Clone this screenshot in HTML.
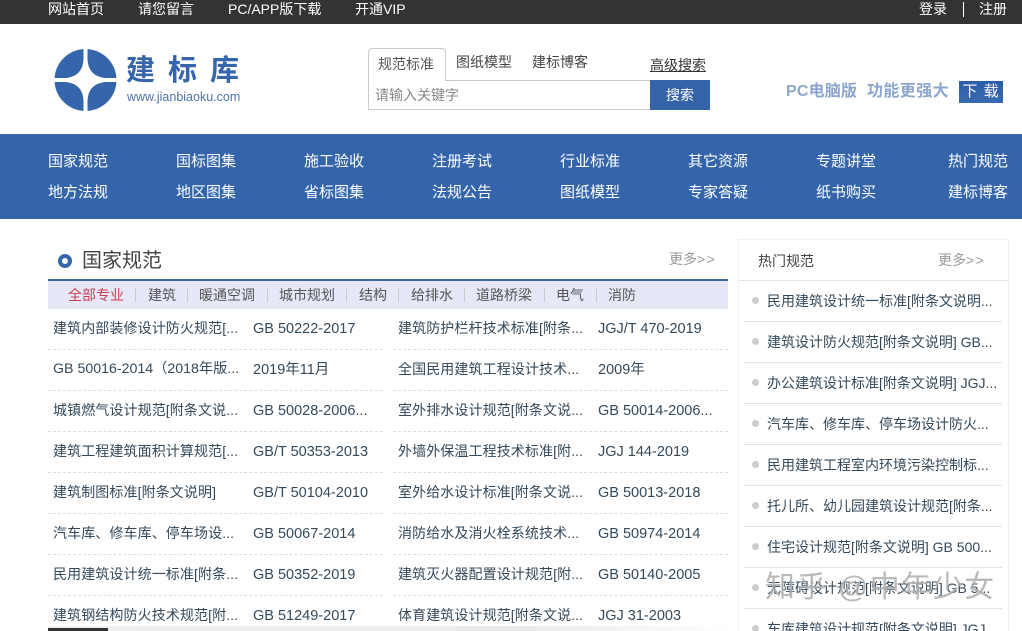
<!DOCTYPE html>
<html lang="zh-CN"><head><meta charset="utf-8"><title>建标库</title>
<style>
html,body{margin:0;padding:0;background:#fff;width:1022px;height:631px;overflow:hidden}
#w{position:relative;width:1022px;height:631px;overflow:hidden;font-family:"Liberation Sans","Noto Sans CJK SC",sans-serif;font-size:14px;color:#333}
.a{position:absolute;white-space:nowrap;line-height:20px}
.b{position:absolute}
.t{color:#fff}
.n{color:#fff;font-size:15px}
.r{color:#34495a;letter-spacing:.1px}
.q{color:#34495a}
.c{color:#34495a;font-size:14.5px;margin-top:1px}
.d{position:absolute;height:0;border-top:1px dashed #ddd}
.f{color:#555}
.s{position:absolute;width:1px;height:14px;top:288px;background:#ccc}
.l{position:absolute;left:744px;width:258px;height:1px;background:#e3e3e3}
.o{position:absolute;left:752px;width:7px;height:7px;border-radius:50%;background:#ccc}
.m{letter-spacing:1.5px}
</style></head><body><div id="w">
<div class="b" style="left:0;top:0;width:1022px;height:24px;background:#333"></div>
<div class="a t" style="left:48px;top:-1px">网站首页</div>
<div class="a t" style="left:138px;top:-1px">请您留言</div>
<div class="a t" style="left:228px;top:-1px">PC/APP版下载</div>
<div class="a t" style="left:355px;top:-1px">开通VIP</div>
<div class="a t" style="left:919px;top:-1px">登录</div>
<div class="b" style="left:963px;top:2px;width:1px;height:15px;background:#fff"></div>
<div class="a t" style="left:979px;top:-1px">注册</div>

<svg class="b" style="left:50px;top:45px" width="72" height="70" viewBox="0 0 72 70">
<circle cx="35.5" cy="35" r="31" fill="#3565aa"/>
<path d="M33.5 2 L33.5 14 Q33 31 16 33 L2 33 L2 37 L16 37 Q33 39 33.5 56 L33.5 68 L37.5 68 L37.5 56 Q38 39 55 37 L69 37 L69 33 L55 33 Q38 31 37.5 14 L37.5 2Z" fill="#fff"/>
</svg>
<div class="a" style="left:126px;top:56px;font-size:29px;line-height:30px;font-weight:700;color:#3565aa;letter-spacing:13px">建标库</div>
<div class="a" style="left:127px;top:87px;font-size:12.5px;color:#4f74a8">www.jianbiaoku.com</div>

<div class="b" style="left:368px;top:48px;width:76px;height:32px;border:1px solid #ccc;border-bottom:none;border-radius:4px 4px 0 0;background:#fff;z-index:2"></div>
<div class="b" style="left:368px;top:80px;width:282px;height:28px;border:1px solid #ccc;border-right:none"></div>
<div class="a" style="left:378px;top:54px;z-index:3;color:#555">规范标准</div>
<div class="a" style="left:456px;top:52px;color:#444">图纸模型</div>
<div class="a" style="left:532px;top:52px;color:#444">建标博客</div>
<div class="a" style="left:650px;top:55px;color:#333;text-decoration:underline">高级搜索</div>
<div class="a" style="left:375px;top:85px;color:#888">请输入关键字</div>
<div class="a" style="left:650px;top:80px;width:60px;height:30px;line-height:30px;background:#3563a8;color:#fff;text-align:center">搜索</div>

<div class="a" style="left:786px;top:82px;font-size:16px;font-weight:700;color:#8ba6cc;letter-spacing:.2px">PC电脑版</div>
<div class="a" style="left:867px;top:82px;font-size:16px;font-weight:700;color:#8ba6cc;letter-spacing:.4px">功能更强大</div>
<div class="a" style="left:959px;top:81px;width:44px;height:22px;line-height:22px;background:linear-gradient(#2a5ca8,#3a6ab0);color:#fff;font-size:15px;text-align:center;letter-spacing:1px">下 载</div>

<div class="b" style="left:0;top:134px;width:1022px;height:85px;background:#3465aa"></div>
<div class="a n" style="left:48px;top:152px">国家规范</div><div class="a n" style="left:176px;top:152px">国标图集</div><div class="a n" style="left:304px;top:152px">施工验收</div><div class="a n" style="left:432px;top:152px">注册考试</div><div class="a n" style="left:560px;top:152px">行业标准</div><div class="a n" style="left:688px;top:152px">其它资源</div><div class="a n" style="left:816px;top:152px">专题讲堂</div><div class="a n" style="left:948px;top:152px">热门规范</div>
<div class="a n" style="left:48px;top:183px">地方法规</div><div class="a n" style="left:176px;top:183px">地区图集</div><div class="a n" style="left:304px;top:183px">省标图集</div><div class="a n" style="left:432px;top:183px">法规公告</div><div class="a n" style="left:560px;top:183px">图纸模型</div><div class="a n" style="left:688px;top:183px">专家答疑</div><div class="a n" style="left:816px;top:183px">纸书购买</div><div class="a n" style="left:948px;top:183px">建标博客</div>

<div class="b" style="left:58px;top:254px;width:6px;height:6px;border:4px solid #3565aa;border-radius:50%"></div>
<div class="a" style="left:82px;top:250px;font-size:20px;line-height:22px;color:#444">国家规范</div>
<div class="a" style="left:669px;top:249px;color:#999">更多<span class="m">&gt;&gt;</span></div>
<div class="b" style="left:48px;top:279px;width:680px;height:2px;background:#40659c"></div>
<div class="b" style="left:48px;top:281px;width:680px;height:28px;background:#e6e8f8"></div>
<div class="a" style="left:68px;top:285px;color:#c8404f">全部专业</div><div class="s" style="left:135px"></div>
<div class="a f" style="left:148px;top:285px">建筑</div><div class="s" style="left:187px"></div>
<div class="a f" style="left:199px;top:285px">暖通空调</div><div class="s" style="left:267px"></div>
<div class="a f" style="left:279px;top:285px">城市规划</div><div class="s" style="left:346px"></div>
<div class="a f" style="left:359px;top:285px">结构</div><div class="s" style="left:398px"></div>
<div class="a f" style="left:411px;top:285px">给排水</div><div class="s" style="left:464px"></div>
<div class="a f" style="left:476px;top:285px">道路桥梁</div><div class="s" style="left:544px"></div>
<div class="a f" style="left:556px;top:285px">电气</div><div class="s" style="left:596px"></div>
<div class="a f" style="left:608px;top:285px">消防</div>

<div class="a r" style="left:53px;top:318px">建筑内部装修设计防火规范[...</div><div class="a c" style="left:253px;top:318px">GB 50222-2017</div>
<div class="a r" style="left:398px;top:318px">建筑防护栏杆技术标准[附条...</div><div class="a c" style="left:598px;top:318px">JGJ/T 470-2019</div>
<div class="d" style="left:48px;top:349px;width:335px"></div><div class="d" style="left:393px;top:349px;width:335px"></div>
<div class="a q" style="left:53px;top:359px;font-size:14.2px">GB 50016-2014（2018年版...</div><div class="a c" style="left:253px;top:359px">2019年11月</div>
<div class="a r" style="left:398px;top:359px">全国民用建筑工程设计技术...</div><div class="a c" style="left:598px;top:359px">2009年</div>
<div class="d" style="left:48px;top:390px;width:335px"></div><div class="d" style="left:393px;top:390px;width:335px"></div>
<div class="a r" style="left:53px;top:400px">城镇燃气设计规范[附条文说...</div><div class="a c" style="left:253px;top:400px">GB 50028-2006...</div>
<div class="a r" style="left:398px;top:400px">室外排水设计规范[附条文说...</div><div class="a c" style="left:598px;top:400px">GB 50014-2006...</div>
<div class="d" style="left:48px;top:431px;width:335px"></div><div class="d" style="left:393px;top:431px;width:335px"></div>
<div class="a r" style="left:53px;top:441px">建筑工程建筑面积计算规范[...</div><div class="a c" style="left:253px;top:441px">GB/T 50353-2013</div>
<div class="a r" style="left:398px;top:441px">外墙外保温工程技术标准[附...</div><div class="a c" style="left:598px;top:441px">JGJ 144-2019</div>
<div class="d" style="left:48px;top:472px;width:335px"></div><div class="d" style="left:393px;top:472px;width:335px"></div>
<div class="a r" style="left:53px;top:482px">建筑制图标准[附条文说明]</div><div class="a c" style="left:253px;top:482px">GB/T 50104-2010</div>
<div class="a r" style="left:398px;top:482px">室外给水设计标准[附条文说...</div><div class="a c" style="left:598px;top:482px">GB 50013-2018</div>
<div class="d" style="left:48px;top:513px;width:335px"></div><div class="d" style="left:393px;top:513px;width:335px"></div>
<div class="a r" style="left:53px;top:523px">汽车库、修车库、停车场设...</div><div class="a c" style="left:253px;top:523px">GB 50067-2014</div>
<div class="a r" style="left:398px;top:523px">消防给水及消火栓系统技术...</div><div class="a c" style="left:598px;top:523px">GB 50974-2014</div>
<div class="d" style="left:48px;top:554px;width:335px"></div><div class="d" style="left:393px;top:554px;width:335px"></div>
<div class="a r" style="left:53px;top:564px">民用建筑设计统一标准[附条...</div><div class="a c" style="left:253px;top:564px">GB 50352-2019</div>
<div class="a r" style="left:398px;top:564px">建筑灭火器配置设计规范[附...</div><div class="a c" style="left:598px;top:564px">GB 50140-2005</div>
<div class="d" style="left:48px;top:595px;width:335px"></div><div class="d" style="left:393px;top:595px;width:335px"></div>
<div class="a r" style="left:53px;top:605px">建筑钢结构防火技术规范[附...</div><div class="a c" style="left:253px;top:605px">GB 51249-2017</div>
<div class="a r" style="left:398px;top:605px">体育建筑设计规范[附条文说...</div><div class="a c" style="left:598px;top:605px">JGJ 31-2003</div>

<div class="b" style="left:738px;top:239px;width:269px;height:400px;border:1px solid #f0f0f0"></div>
<div class="b" style="left:739px;top:280px;width:269px;height:1px;background:#e3e3e3"></div>
<div class="a" style="left:758px;top:251px;color:#444">热门规范</div>
<div class="a" style="left:938px;top:250px;color:#999">更多<span class="m">&gt;&gt;</span></div>

<div class="o" style="top:297px"></div><div class="a q" style="left:767px;top:291px">民用建筑设计统一标准[附条文说明...</div><div class="l" style="top:321px"></div>
<div class="o" style="top:338px"></div><div class="a q" style="left:767px;top:332px">建筑设计防火规范[附条文说明] GB...</div><div class="l" style="top:362px"></div>
<div class="o" style="top:379px"></div><div class="a q" style="left:767px;top:373px">办公建筑设计标准[附条文说明] JGJ...</div><div class="l" style="top:403px"></div>
<div class="o" style="top:420px"></div><div class="a q" style="left:767px;top:414px">汽车库、修车库、停车场设计防火...</div><div class="l" style="top:444px"></div>
<div class="o" style="top:461px"></div><div class="a q" style="left:767px;top:455px">民用建筑工程室内环境污染控制标...</div><div class="l" style="top:485px"></div>
<div class="o" style="top:502px"></div><div class="a q" style="left:767px;top:496px">托儿所、幼儿园建筑设计规范[附条...</div><div class="l" style="top:526px"></div>
<div class="o" style="top:543px"></div><div class="a q" style="left:767px;top:537px">住宅设计规范[附条文说明] GB 500...</div><div class="l" style="top:567px"></div>
<div class="o" style="top:584px"></div><div class="a q" style="left:767px;top:578px">无障碍设计规范[附条文说明] GB 5...</div><div class="l" style="top:608px"></div>
<div class="o" style="top:625px"></div><div class="a q" style="left:767px;top:619px">车库建筑设计规范[附条文说明] JGJ...</div>

<div class="a" style="left:765px;top:572px;font-size:30px;line-height:32px;color:rgba(140,140,140,.6);letter-spacing:1.5px;text-shadow:0 0 1px rgba(255,255,255,.7)">知乎 @中年少女</div>

<div class="b" style="left:48px;top:626px;width:690px;height:5px;background:linear-gradient(to right,#eee 0%,#eaeaea 70%,rgba(240,240,240,0) 100%)"></div>
<div class="b" style="left:48px;top:628px;width:60px;height:3px;background:#333"></div>
</div></body></html>
